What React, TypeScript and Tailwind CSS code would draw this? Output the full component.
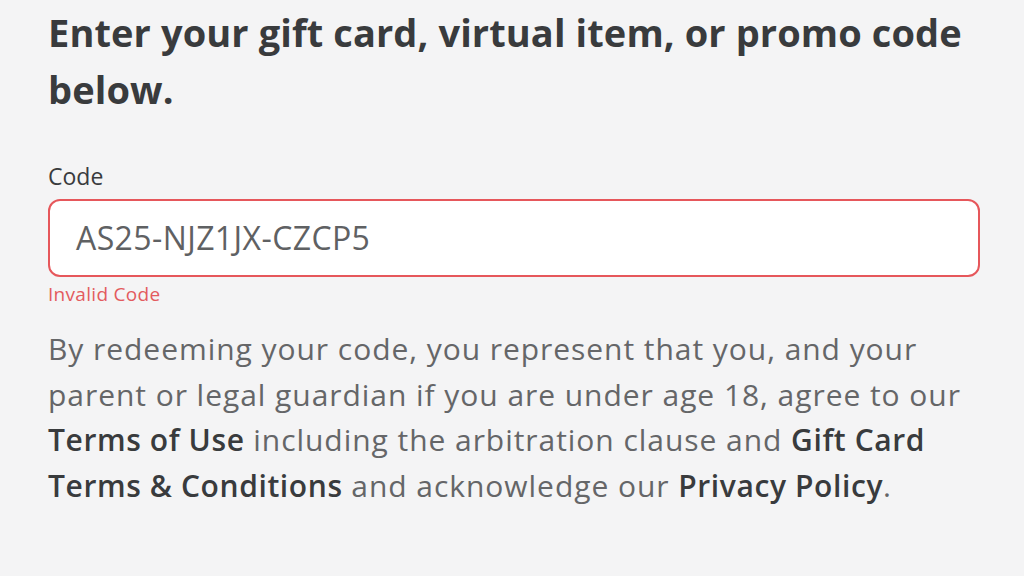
import React from 'react';

export default function App() {
  return (
    <div className="w-[1024px] h-[576px] bg-[#f4f4f5] overflow-hidden" style={{ fontFamily: '"Open Sans", "Noto Sans", sans-serif' }}>
      <div className="pl-[48px] pr-[44px] pt-[4px]">
        <h1 className="text-[38px] leading-[57px] font-bold tracking-[0.1px] text-[#393b3d]">
          Enter your gift card, virtual item, or promo code below.
        </h1>

        <div className="mt-[44px]">
          <label className="block text-[23px] leading-[28px] text-[#393b3d]">Code</label>
          <div className="mt-[9px] h-[78px] rounded-[12px] border-2 border-[#e6575b] bg-white flex items-center px-[26px]">
            <span className="text-[32px] tracking-[0.4px] text-[#5f6163]">AS25-NJZ1JX-CZCP5</span>
          </div>
          <p className="mt-[5px] text-[19px] leading-[24px] tracking-[0.3px] text-[#e35b5e]">Invalid Code</p>
        </div>

        <p className="mt-[20px] text-[30px] leading-[45.7px] tracking-[0.95px] text-[#656668] whitespace-nowrap">
          By redeeming your code, you represent that you, and your
          <br />
          parent or legal guardian if you are under age 18, agree to our
          <br />
          <span className="font-semibold tracking-[0.6px] text-[#393b3d]">Terms of Use</span> including the arbitration clause and{' '}
          <span className="font-semibold tracking-[0.6px] text-[#393b3d]">Gift Card</span>
          <br />
          <span className="font-semibold tracking-[0.6px] text-[#393b3d]">Terms &amp; Conditions</span> and acknowledge our{' '}
          <span className="font-semibold tracking-[0.6px] text-[#393b3d]">Privacy Policy</span>.
        </p>
      </div>
    </div>
  );
}
